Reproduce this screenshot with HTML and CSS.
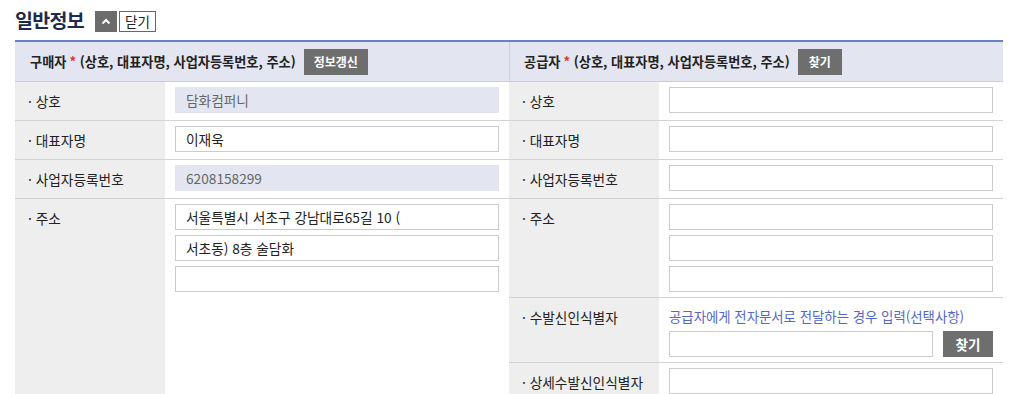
FILE: index.html
```html
<!DOCTYPE html>
<html lang="ko">
<head>
<meta charset="utf-8">
<title>일반정보</title>
<link rel="stylesheet" href="styles.css">
</head>
<body>
<div class="page">
  <div class="title-bar">
    <h2 class="title">일반정보</h2>
    <button class="btn-toggle" type="button" aria-label="접기">
      <svg width="10" height="7" viewBox="0 0 10 7"><polyline points="1.5,5.5 5,2 8.5,5.5" fill="none" stroke="#fff" stroke-width="2"/></svg>
    </button>
    <button class="btn-close" type="button">닫기</button>
  </div>
  <div class="panel">
    <div class="side">
      <div class="side-head">구매자 <span class="req">*</span>&nbsp;(상호, 대표자명, 사업자등록번호, 주소)<button class="btn-dark btn-refresh" type="button">정보갱신</button></div>
      <div class="row">
        <div class="label">· 상호</div>
        <div class="field"><input class="inp readonly" value="담화컴퍼니" readonly></div>
      </div>
      <div class="row">
        <div class="label">· 대표자명</div>
        <div class="field"><input class="inp" value="이재욱"></div>
      </div>
      <div class="row">
        <div class="label">· 사업자등록번호</div>
        <div class="field"><input class="inp readonly" value="6208158299" readonly></div>
      </div>
      <div class="row grow">
        <div class="label">· 주소</div>
        <div class="field stack">
          <input class="inp" value="서울특별시 서초구 강남대로65길 10 (">
          <input class="inp" value="서초동) 8층 술담화">
          <input class="inp" value="">
        </div>
      </div>
    </div>
    <div class="side">
      <div class="side-head right-head">공급자 <span class="req">*</span>&nbsp;(상호, 대표자명, 사업자등록번호, 주소)<button class="btn-dark btn-find" type="button">찾기</button></div>
      <div class="row">
        <div class="label">· 상호</div>
        <div class="field"><input class="inp" value=""></div>
      </div>
      <div class="row">
        <div class="label">· 대표자명</div>
        <div class="field"><input class="inp" value=""></div>
      </div>
      <div class="row">
        <div class="label">· 사업자등록번호</div>
        <div class="field"><input class="inp" value=""></div>
      </div>
      <div class="row">
        <div class="label">· 주소</div>
        <div class="field stack">
          <input class="inp" value="">
          <input class="inp" value="">
          <input class="inp" value="">
        </div>
      </div>
      <div class="row">
        <div class="label">· 수발신인식별자</div>
        <div class="field">
          <div class="help">공급자에게 전자문서로 전달하는 경우 입력(선택사항)</div>
          <div class="find-line">
            <input class="inp" value="">
            <button class="btn-dark btn-find-lg" type="button">찾기</button>
          </div>
        </div>
      </div>
      <div class="row last">
        <div class="label">· 상세수발신인식별자</div>
        <div class="field"><input class="inp" value=""></div>
      </div>
    </div>
  </div>
</div>
</body>
</html>
```

FILE: styles.css
```css
* { box-sizing: border-box; }
html, body { margin: 0; padding: 0; background: #fff; }
body {
  font-family: "Noto Sans CJK KR", "Noto Sans", sans-serif;
  font-size: 13px;
  color: #222;
  overflow: hidden;
}
.page {
  width: 1003px;
  height: 394px;
  padding-left: 15px;
  overflow: hidden;
}
.title-bar {
  display: flex;
  align-items: center;
  height: 40px;
  padding-top: 2px;
}
.title {
  margin: 0 11px 0 0;
  font-size: 19.5px;
  font-weight: 700;
  line-height: 24px;
  color: #1f2a4c;
  letter-spacing: -0.7px;
  position: relative;
  top: -1px;
}
.btn-toggle {
  width: 22px;
  height: 21px;
  margin: 0 2px 0 0;
  padding: 0;
  border: 0;
  background: #6b6b6b;
  display: flex;
  align-items: center;
  justify-content: center;
}
.btn-close {
  width: 37px;
  height: 21px;
  padding: 0;
  border: 1px solid #666;
  background: #fff;
  font-family: inherit;
  font-size: 13.5px;
  line-height: 19px;
  color: #222;
}
.panel {
  display: grid;
  grid-template-columns: 494px 494px;
  border-top: 2px solid #6a80cc;
}
.side {
  display: flex;
  flex-direction: column;
}
.side-head {
  display: flex;
  align-items: center;
  height: 40px;
  padding-left: 15px;
  background: #e3e6f0;
  border-bottom: 1px solid #cfcfcf;
  font-weight: 700;
  font-size: 13.2px;
  white-space: nowrap;
}
.right-head { border-left: 1px solid #cfcfcf; padding-left: 14px; }
.req { color: #e0392f; margin-left: 3px; }
.btn-dark {
  height: 26px;
  padding: 0;
  border: 0;
  background: #6e6e6e;
  color: #fff;
  font-family: inherit;
  font-weight: 700;
}
.btn-refresh { width: 64px; margin-left: 8px; font-size: 12px; }
.btn-find { width: 44px; margin-left: 8px; font-size: 12px; }
.btn-find-lg { width: 50px; font-size: 13.5px; flex: none; }
.row {
  display: flex;
  border-bottom: 1px solid #d3d3d3;
}
.row.grow { flex: 1; border-bottom: 0; }
.row.last { flex: 1; border-bottom: 0; }
.label {
  flex: none;
  width: 150px;
  background: #eeeeee;
  padding: 6px 0 0 13px;
  font-size: 13.7px;
  line-height: 26px;
  white-space: nowrap;
}
.field {
  flex: 1;
  min-height: 38px;
  padding: 5px 10px;
}
.stack { display: flex; flex-direction: column; gap: 5px; }
.inp {
  display: block;
  width: 100%;
  height: 26px;
  margin: 0;
  padding: 0 10px;
  border: 1px solid #cccccc;
  background: #fff;
  font-family: inherit;
  font-size: 13.7px;
  color: #222;
  outline: none;
}
.inp.readonly {
  background: #e3e6f0;
  border-color: #e3e6f0;
  color: #666;
}
.help {
  font-size: 13.4px;
  line-height: 26px;
  color: #5568c8;
  white-space: nowrap;
}
.find-line {
  display: flex;
  gap: 10px;
  margin-top: 2px;
}
.find-line .inp { flex: 1; width: auto; }
```
